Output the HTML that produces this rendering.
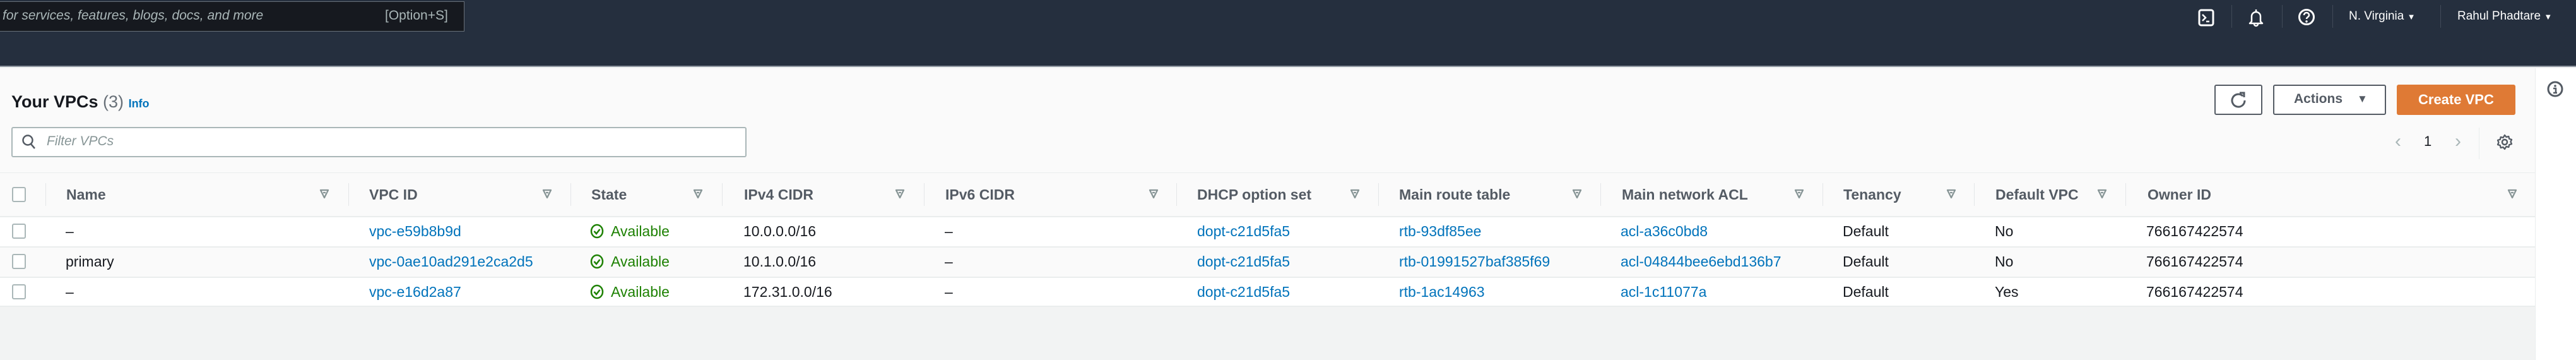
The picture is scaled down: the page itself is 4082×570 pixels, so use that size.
<!DOCTYPE html>
<html><head><meta charset="utf-8"><style>
*{margin:0;padding:0;box-sizing:border-box}
body{width:4082px;height:570px;overflow:hidden;background:#f2f3f3;font-family:"Liberation Sans",sans-serif;position:relative}
.a{position:absolute;white-space:nowrap}
.nav{left:0;top:0;width:4082px;height:106px;background:#252f3e;border-bottom:2px solid #8a929c}
.h{font-weight:bold;color:#545b64;font-size:23px;top:295px}
.d{font-size:23px;color:#16191f}
.l{color:#0073bb}
.g{color:#1d8102}
.sep{width:1px;height:36px;background:#e4e6e8;top:290px}
.cb{width:22px;height:24px;border:2px solid #aab7b8;border-radius:3px;background:#fff;left:19px}
.fi{top:299px}
.nsep{width:1px;height:36px;background:#414a58;top:8px}
</style></head><body>
<div class="a nav"></div>
<div class="a" style="left:0;top:2px;width:736px;height:48px;background:#16191f;border:1px solid #687078;border-left:none"></div>
<div class="a" style="left:4px;top:13px;font-size:21px;font-style:italic;color:#aab7b8">for services, features, blogs, docs, and more</div>
<div class="a" style="left:610px;top:13px;font-size:21px;color:#aab7b8">[Option+S]</div>

<!-- nav right -->
<svg class="a" style="left:3483px;top:14px" width="26" height="28" viewBox="0 0 26 28"><rect x="2" y="2" width="22" height="24" rx="3" fill="none" stroke="#fff" stroke-width="3"/><path d="M7 9l5 5-5 5M13 20h5" fill="none" stroke="#fff" stroke-width="2.5"/></svg>
<div class="a nsep" style="left:3536px"></div>
<svg class="a" style="left:3562px;top:12px" width="26" height="32" viewBox="0 0 26 32"><path d="M13 3v3M6 22V14a7 7 0 0114 0v8l3 3H3z M10 26a3 3 0 006 0" fill="none" stroke="#fff" stroke-width="2.5" stroke-linejoin="round"/></svg>
<div class="a nsep" style="left:3616px"></div>
<svg class="a" style="left:3641px;top:13px" width="28" height="28" viewBox="0 0 28 28"><circle cx="14" cy="14" r="11.5" fill="none" stroke="#fff" stroke-width="3"/><path d="M10 11a4 4 0 118 0c0 3-4 3-4 6" fill="none" stroke="#fff" stroke-width="2.5"/><circle cx="14" cy="21" r="1.7" fill="#fff"/></svg>
<div class="a nsep" style="left:3696px"></div>
<div class="a" style="left:3722px;top:15px;font-size:19px;color:#fff">N. Virginia <span style="font-size:13px">▼</span></div>
<div class="a nsep" style="left:3867px"></div>
<div class="a" style="left:3894px;top:15px;font-size:19px;color:#fff">Rahul Phadtare <span style="font-size:13px">▼</span></div>

<!-- content -->
<div class="a" style="left:0;top:108px;width:4017px;height:378px;background:#fafafa"></div>
<div class="a" style="left:4017px;top:108px;width:65px;height:462px;background:#fff;border-left:1px solid #eaeded"></div>
<svg class="a" style="left:4036px;top:128px" width="26" height="26" viewBox="0 0 26 26"><circle cx="13" cy="13" r="11" fill="none" stroke="#545b64" stroke-width="3"/><circle cx="13" cy="8" r="1.8" fill="#545b64"/><path d="M10 12h4v7M10 19h6" fill="none" stroke="#545b64" stroke-width="2.5"/></svg>

<div class="a" style="left:18px;top:146px;font-size:27px;font-weight:bold;color:#16191f">Your VPCs <span style="font-weight:normal;color:#687078">(3)</span> <span style="font-size:18px;color:#0073bb">Info</span></div>
<div class="a" style="left:18px;top:201px;width:1165px;height:48px;background:#fff;border:2px solid #aab7b8;border-radius:3px"></div>
<svg class="a" style="left:34px;top:212px" width="24" height="26" viewBox="0 0 24 26"><circle cx="10" cy="10" r="7.5" fill="none" stroke="#545b64" stroke-width="2.5"/><path d="M15 16l6 7" stroke="#545b64" stroke-width="2.5"/></svg>
<div class="a" style="left:74px;top:212px;font-size:21px;font-style:italic;color:#879596">Filter VPCs</div>

<div class="a" style="left:3509px;top:134px;width:76px;height:48px;border:2px solid #545b64;border-radius:3px;background:#fff"></div>
<svg class="a" style="left:3533px;top:144px" width="28" height="28" viewBox="0 0 28 28"><path d="M21 8A10 10 0 1024 15" fill="none" stroke="#545b64" stroke-width="3"/><path d="M16 3h7v7" fill="none" stroke="#545b64" stroke-width="3"/></svg>
<div class="a" style="left:3602px;top:134px;width:179px;height:48px;border:2px solid #545b64;border-radius:3px;background:#fff"></div>
<div class="a" style="left:3635px;top:145px;font-size:21px;font-weight:bold;color:#545b64">Actions</div>
<div class="a" style="left:3735px;top:147px;font-size:17px;color:#545b64">▼</div>
<div class="a" style="left:3798px;top:134px;width:188px;height:48px;background:#df7a35;border-radius:3px"></div>
<div class="a" style="left:3832px;top:145px;font-size:22px;font-weight:bold;color:#fff">Create VPC</div>

<div class="a" style="left:3795px;top:207px;font-size:30px;color:#aab7b8">‹</div>
<div class="a" style="left:3841px;top:211px;font-size:22px;color:#16191f">1</div>
<div class="a" style="left:3890px;top:207px;font-size:30px;color:#aab7b8">›</div>
<div class="a" style="left:3928px;top:202px;width:1px;height:50px;background:#eaeded"></div>
<svg class="a" style="left:3955px;top:211px" width="28" height="28" viewBox="0 0 28 28"><circle cx="14" cy="14" r="4" fill="none" stroke="#545b64" stroke-width="2.5"/><path d="M14 3l2.5 3 3.8-1 .9 3.8 3.8 1.2-1.5 3.5 1.5 3.5-3.8 1.2-.9 3.8-3.8-1L14 25l-2.5-3-3.8 1-.9-3.8-3.8-1.2 1.5-3.5-1.5-3.5 3.8-1.2.9-3.8 3.8 1z" fill="none" stroke="#545b64" stroke-width="2.3" stroke-linejoin="round"/></svg>

<!-- table -->
<div class="a" style="left:0;top:273px;width:4017px;height:1px;background:#eaeded"></div>
<div class="a" style="left:0;top:342px;width:4017px;height:48px;background:#fff;border-top:2px solid #eaeded"></div>
<div class="a" style="left:0;top:390px;width:4017px;height:49px;background:#fafafa;border-top:2px solid #eaeded"></div>
<div class="a" style="left:0;top:438px;width:4017px;height:48px;background:#fff;border-top:2px solid #eaeded;border-bottom:2px solid #eaeded"></div>

<div class="a cb" style="top:296px"></div>
<div class="a cb" style="top:354px"></div>
<div class="a cb" style="top:402px"></div>
<div class="a cb" style="top:450px"></div>

<div class="a sep" style="left:72px"></div><div class="a sep" style="left:552px"></div><div class="a sep" style="left:904px"></div><div class="a sep" style="left:1144px"></div><div class="a sep" style="left:1464px"></div><div class="a sep" style="left:1864px"></div><div class="a sep" style="left:2184px"></div><div class="a sep" style="left:2536px"></div><div class="a sep" style="left:2888px"></div><div class="a sep" style="left:3128px"></div><div class="a sep" style="left:3368px"></div>

<div class="a h" style="left:105px">Name</div>
<div class="a h" style="left:585px">VPC ID</div>
<div class="a h" style="left:937px">State</div>
<div class="a h" style="left:1179px">IPv4 CIDR</div>
<div class="a h" style="left:1498px">IPv6 CIDR</div>
<div class="a h" style="left:1897px">DHCP option set</div>
<div class="a h" style="left:2217px">Main route table</div>
<div class="a h" style="left:2570px">Main network ACL</div>
<div class="a h" style="left:2921px">Tenancy</div>
<div class="a h" style="left:3162px">Default VPC</div>
<div class="a h" style="left:3403px">Owner ID</div>

<svg width="0" height="0" style="position:absolute"><defs><symbol id="f" viewBox="0 0 16 16"><path d="M2 2h12l-6 12z M6 6h4" fill="none" stroke="#879596" stroke-width="2.3" stroke-linejoin="round"/></symbol><symbol id="ok" viewBox="0 0 22 24"><ellipse cx="11" cy="12" rx="9" ry="10" fill="none" stroke="#1d8102" stroke-width="2.5"/><path d="M6.5 12l3.5 4 5.5-7" fill="none" stroke="#1d8102" stroke-width="2.5"/></symbol></defs></svg>
<svg class="a fi" style="left:506px" width="16" height="16"><use href="#f"/></svg>
<svg class="a fi" style="left:859px" width="16" height="16"><use href="#f"/></svg>
<svg class="a fi" style="left:1098px" width="16" height="16"><use href="#f"/></svg>
<svg class="a fi" style="left:1418px" width="16" height="16"><use href="#f"/></svg>
<svg class="a fi" style="left:1820px" width="16" height="16"><use href="#f"/></svg>
<svg class="a fi" style="left:2139px" width="16" height="16"><use href="#f"/></svg>
<svg class="a fi" style="left:2491px" width="16" height="16"><use href="#f"/></svg>
<svg class="a fi" style="left:2843px" width="16" height="16"><use href="#f"/></svg>
<svg class="a fi" style="left:3084px" width="16" height="16"><use href="#f"/></svg>
<svg class="a fi" style="left:3323px" width="16" height="16"><use href="#f"/></svg>
<svg class="a fi" style="left:3973px" width="16" height="16"><use href="#f"/></svg>

<!-- row 1 -->
<div class="a d" style="left:104px;top:353px">–</div>
<div class="a d l" style="left:585px;top:353px">vpc-e59b8b9d</div>
<svg class="a" style="left:935px;top:354px" width="22" height="24"><use href="#ok"/></svg>
<div class="a d g" style="left:968px;top:353px">Available</div>
<div class="a d" style="left:1178px;top:353px">10.0.0.0/16</div>
<div class="a d" style="left:1497px;top:353px">–</div>
<div class="a d l" style="left:1897px;top:353px">dopt-c21d5fa5</div>
<div class="a d l" style="left:2217px;top:353px">rtb-93df85ee</div>
<div class="a d l" style="left:2568px;top:353px">acl-a36c0bd8</div>
<div class="a d" style="left:2920px;top:353px">Default</div>
<div class="a d" style="left:3161px;top:353px">No</div>
<div class="a d" style="left:3401px;top:353px">766167422574</div>
<!-- row 2 -->
<div class="a d" style="left:104px;top:401px">primary</div>
<div class="a d l" style="left:585px;top:401px">vpc-0ae10ad291e2ca2d5</div>
<svg class="a" style="left:935px;top:402px" width="22" height="24"><use href="#ok"/></svg>
<div class="a d g" style="left:968px;top:401px">Available</div>
<div class="a d" style="left:1178px;top:401px">10.1.0.0/16</div>
<div class="a d" style="left:1497px;top:401px">–</div>
<div class="a d l" style="left:1897px;top:401px">dopt-c21d5fa5</div>
<div class="a d l" style="left:2217px;top:401px">rtb-01991527baf385f69</div>
<div class="a d l" style="left:2568px;top:401px">acl-04844bee6ebd136b7</div>
<div class="a d" style="left:2920px;top:401px">Default</div>
<div class="a d" style="left:3161px;top:401px">No</div>
<div class="a d" style="left:3401px;top:401px">766167422574</div>
<!-- row 3 -->
<div class="a d" style="left:104px;top:449px">–</div>
<div class="a d l" style="left:585px;top:449px">vpc-e16d2a87</div>
<svg class="a" style="left:935px;top:450px" width="22" height="24"><use href="#ok"/></svg>
<div class="a d g" style="left:968px;top:449px">Available</div>
<div class="a d" style="left:1178px;top:449px">172.31.0.0/16</div>
<div class="a d" style="left:1497px;top:449px">–</div>
<div class="a d l" style="left:1897px;top:449px">dopt-c21d5fa5</div>
<div class="a d l" style="left:2217px;top:449px">rtb-1ac14963</div>
<div class="a d l" style="left:2568px;top:449px">acl-1c11077a</div>
<div class="a d" style="left:2920px;top:449px">Default</div>
<div class="a d" style="left:3161px;top:449px">Yes</div>
<div class="a d" style="left:3401px;top:449px">766167422574</div>
</body></html>
